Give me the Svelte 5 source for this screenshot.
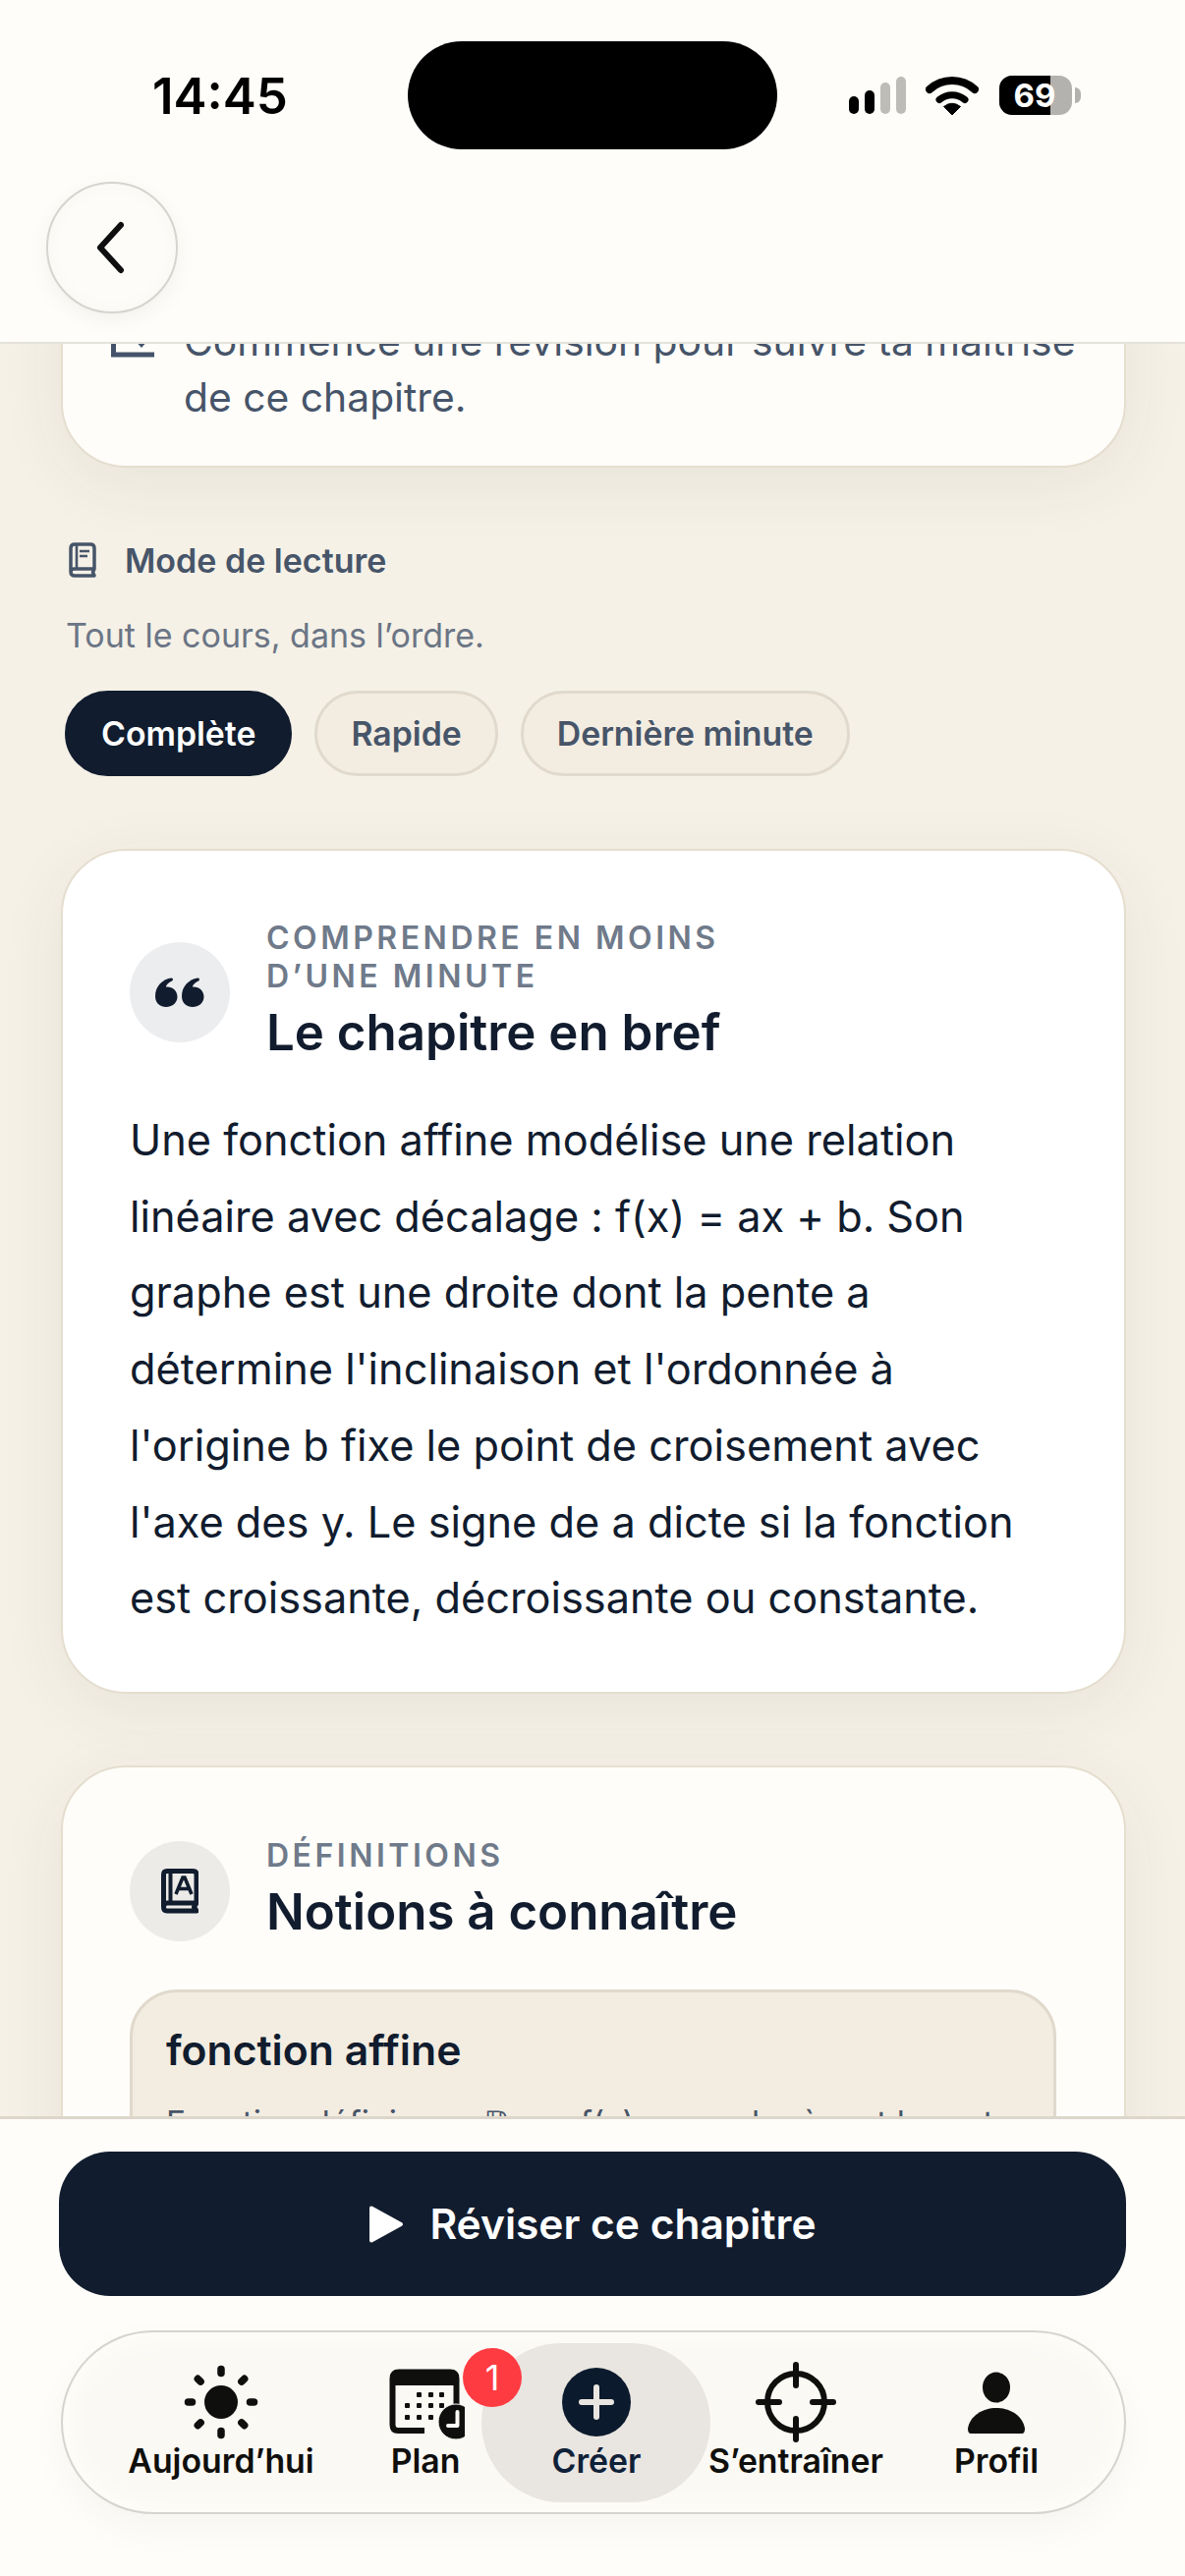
<script>
  const lines = [
    "Une fonction affine modélise une relation",
    "linéaire avec décalage : f(x) = ax + b. Son",
    "graphe est une droite dont la pente a",
    "détermine l'inclinaison et l'ordonnée à",
    "l'origine b fixe le point de croisement avec",
    "l'axe des y. Le signe de a dicte si la fonction",
    "est croissante, décroissante ou constante."
  ];
  const rays = [0, 45, 90, 135, 180, 225, 270, 315];
</script>

<div class="phone">
  <header class="head">
    <div class="status">
      <span class="time">14:45</span>
      <div class="island"></div>
      <div class="sys">
        <svg class="signal" width="58" height="38" viewBox="0 0 58 38">
          <rect x="0" y="20" width="10" height="18" rx="5" fill="#000" />
          <rect x="16" y="14" width="10" height="24" rx="5" fill="#000" />
          <rect x="32" y="6" width="10" height="32" rx="5" fill="#bdbcb7" />
          <rect x="48" y="0" width="10" height="38" rx="5" fill="#bdbcb7" />
        </svg>
        <svg class="wifi" width="54" height="40" viewBox="0 0 54 40">
          <path d="M4 14A34 34 0 0 1 50 14" fill="none" stroke="#000" stroke-width="8" stroke-linecap="round" />
          <path d="M14 24.500A20 20 0 0 1 40 24.500" fill="none" stroke="#000" stroke-width="7" stroke-linecap="round" />
          <path d="M27 40L18.500 31.500Q27 25 35.500 31.500Z" fill="#000" stroke="#000" stroke-width="1" stroke-linejoin="round" />
        </svg>
        <div class="battery">
          <div class="batt-body">
            <div class="batt-fill"></div>
            <span class="batt-num">69</span>
          </div>
          <div class="batt-nub"></div>
        </div>
      </div>
    </div>
    <button class="back" aria-label="Retour">
      <svg width="40" height="60" viewBox="0 0 40 60">
        <path d="M30 7L9 30L30 53" fill="none" stroke="#0f0f0f" stroke-width="6" stroke-linecap="round" stroke-linejoin="round" />
      </svg>
    </button>
  </header>

  <main class="scroll">
    <div class="inner">
      <section class="card progress">
        <svg class="chart" width="44" height="46" viewBox="0 0 44 46">
          <path d="M2.500 0V42H44" fill="none" stroke="#44536b" stroke-width="5" />
          <path d="M24 27L31 35L38 27Z" fill="#44536b" />
        </svg>
        <p>Commence une révision pour suivre ta maîtrise<br />de ce chapitre.</p>
      </section>

      <div class="mode">
        <svg width="28" height="36" viewBox="0 0 28 36">
          <path d="M26 27V6Q26 2 22 2H6Q2 2 2 6V30Q2 34 6 34H26L24.500 30.500L26 27H6Q2 27 2 30" fill="none" stroke="#475569" stroke-width="3.500" stroke-linejoin="round" />
          <path d="M8 3V27M11 9H21M11 14H19" fill="none" stroke="#475569" stroke-width="2.600" />
        </svg>
        <span>Mode de lecture</span>
      </div>
      <p class="mode-sub">Tout le cours, dans l’ordre.</p>
      <div class="chips">
        <span class="chip on">Complète</span>
        <span class="chip">Rapide</span>
        <span class="chip">Dernière minute</span>
      </div>

      <section class="card brief">
        <div class="card-head">
          <div class="disc">
            <svg width="50" height="30" viewBox="0 0 50 30">
              <path d="M11 30C4.500 30 0 25.500 0 19C0 9 7 2 16 0.500C18 0.200 18.800 2.500 17 3.400C13.500 5 11.500 7 10.800 9.500C17 8.800 22.500 13 22.500 19.500C22.500 25.500 17.500 30 11 30Z" fill="#111c2e" />
              <path d="M38 30C31.500 30 27 25.500 27 19C27 9 34 2 43 0.500C45 0.200 45.800 2.500 44 3.400C40.500 5 38.500 7 37.800 9.500C44 8.800 49.500 13 49.500 19.500C49.500 25.500 44.500 30 38 30Z" fill="#111c2e" />
            </svg>
          </div>
          <div class="head-text">
            <div class="eyebrow">COMPRENDRE EN MOINS<br />D’UNE MINUTE</div>
            <h2>Le chapitre en bref</h2>
          </div>
        </div>
        <div class="body-text">
          {#each lines as l}<div>{l}</div>{/each}
        </div>
      </section>

      <section class="card defs">
        <div class="card-head">
          <div class="disc alt">
            <svg width="38" height="46" viewBox="0 0 38 46">
              <path d="M36 35V6Q36 2.500 32 2.500H6Q2.500 2.500 2.500 6V39Q2.500 43 6 43H36L33.500 39L36 35H6Q2.500 35 2.500 39" fill="none" stroke="#111c2e" stroke-width="5" stroke-linejoin="round" />
              <path d="M9.500 4V34" stroke="#111c2e" stroke-width="4" />
              <path d="M15 26L22 9H24L31 26M17.500 20.500H28.500" fill="none" stroke="#111c2e" stroke-width="3.600" />
            </svg>
          </div>
          <div class="head-text">
            <div class="eyebrow">DÉFINITIONS</div>
            <h2>Notions à connaître</h2>
          </div>
        </div>
        <div class="def">
          <h3>fonction affine</h3>
          <p>Fonction définie sur ℝ par f(x) = ax + b où a et b sont des réels.</p>
        </div>
      </section>
    </div>
  </main>

  <footer class="foot">
    <button class="cta">
      <svg width="36" height="40" viewBox="0 0 36 40">
        <path d="M3 3.500V36.500L33 20Z" fill="#fff" stroke="#fff" stroke-width="4" stroke-linejoin="round" />
      </svg>
      <span>Réviser ce chapitre</span>
    </button>

    <nav class="tabs">
      <div class="pill"></div>

      <div class="tab">
        <svg width="80" height="80" viewBox="-40 -40 80 80">
          <circle r="17" fill="#0f0f0d" />
          {#each rays as r}
            <line x1="0" y1="-29.500" x2="0" y2="-33.500" stroke="#0f0f0d" stroke-width="7.500" stroke-linecap="round" transform="rotate({r})" />
          {/each}
        </svg>
        <span>Aujourd’hui</span>
      </div>

      <div class="tab">
        <svg width="80" height="80" viewBox="0 0 80 80">
          <path d="M39 69H12Q6.500 69 6.500 63V16Q6.500 9.500 13 9.500H65Q71.500 9.500 71.500 16V47" fill="none" stroke="#0f0f0d" stroke-width="6" />
          <path d="M5 23V16Q5 8 12 8H66Q73 8 73 16V23Z" fill="#0f0f0d" />
          <g fill="#0f0f0d">
            <rect x="31" y="30" width="5" height="5" rx="1" /><rect x="43" y="30" width="5" height="5" rx="1" /><rect x="54" y="30" width="5" height="5" rx="1" />
            <rect x="19" y="41" width="5" height="5" rx="1" /><rect x="31" y="41" width="5" height="5" rx="1" /><rect x="43" y="41" width="5" height="5" rx="1" /><rect x="54" y="41" width="5" height="5" rx="1" />
            <rect x="19" y="53" width="5" height="5" rx="1" /><rect x="31" y="53" width="5" height="5" rx="1" /><rect x="43" y="53" width="5" height="5" rx="1" />
          </g>
          <circle cx="71" cy="60" r="18" fill="#0f0f0d" stroke="#fcfaf6" stroke-width="1" />
          <path d="M72.500 50V64H63" fill="none" stroke="#fcfaf6" stroke-width="4" stroke-linecap="round" stroke-linejoin="round" />
        </svg>
        <span>Plan</span>
        <div class="badge">1</div>
      </div>

      <div class="tab active">
        <svg width="80" height="80" viewBox="-40 -40 80 80">
          <circle r="35" fill="#0b1a2c" />
          <path d="M0 -15V15M-15 0H15" stroke="#e9e5e0" stroke-width="6" stroke-linecap="round" />
        </svg>
        <span>Créer</span>
      </div>

      <div class="tab">
        <svg width="88" height="88" viewBox="-44 -44 88 88" class="target">
          <circle r="29" fill="none" stroke="#0f0f0d" stroke-width="6" />
          <path d="M0 -38V-17M0 38V17M-38 0H-17M38 0H17" stroke="#0f0f0d" stroke-width="6" stroke-linecap="round" />
        </svg>
        <span>S’entraîner</span>
      </div>

      <div class="tab">
        <svg width="80" height="80" viewBox="-40 -40 80 80">
          <ellipse cx="0" cy="-15" rx="14" ry="15.500" fill="#0f0f0d" />
          <path d="M-26 32Q-29 32 -29 27C-27 14 -14 6 0 6C14 6 27 14 29 27Q29 32 26 32Z" fill="#0f0f0d" />
        </svg>
        <span>Profil</span>
      </div>
    </nav>
  </footer>
</div>

<style>
  :global(body) {
    margin: 0;
    background: #f5f1e7;
  }
  .phone {
    width: 1206px;
    height: 2622px;
    display: flex;
    flex-direction: column;
    overflow: hidden;
    background: #f5f1e7;
    font-family: Inter, "Noto Sans", sans-serif;
    color: #111c2e;
  }
  p, h2, h3 { margin: 0; }

  .head {
    position: relative;
    z-index: 2;
    flex: none;
    box-sizing: border-box;
    height: 350px;
    padding-top: 42px;
    background: #fefdf9;
    border-bottom: 2px solid #e5e2db;
  }
  .status {
    display: flex;
    align-items: center;
    height: 110px;
    padding-left: 155px;
  }
  .time {
    width: 136px;
    font-size: 51px;
    font-weight: 600;
    color: #000;
    white-space: nowrap;
  }
  .island {
    width: 376px;
    height: 110px;
    margin-left: 124px;
    border-radius: 55px;
    background: #000;
  }
  .sys {
    display: flex;
    align-items: center;
    margin-left: 73px;
  }
  .signal { margin-right: 20px; }
  .wifi { margin-right: 21px; }
  .battery {
    display: flex;
    align-items: center;
  }
  .batt-body {
    position: relative;
    width: 74px;
    height: 40px;
    border-radius: 13px;
    overflow: hidden;
    background: #b3b2ae;
  }
  .batt-fill {
    width: 52px;
    height: 100%;
    background: #000;
  }
  .batt-num {
    position: absolute;
    inset: 0;
    display: flex;
    align-items: center;
    justify-content: center;
    padding-right: 2px;
    font-size: 33px;
    font-weight: 700;
    color: #fff;
  }
  .batt-nub {
    width: 6px;
    height: 16px;
    margin-left: 3px;
    border-radius: 0 8px 8px 0;
    background: #b3b2ae;
  }
  .back {
    display: flex;
    align-items: center;
    justify-content: center;
    box-sizing: border-box;
    width: 134px;
    height: 134px;
    margin: 33px 0 0 47px;
    padding: 0;
    border: 2px solid #d6d4ce;
    border-radius: 50%;
    background: #fdfcf8;
    box-shadow: 0 6px 22px rgba(0, 0, 0, .05), inset 0 0 22px rgba(0, 0, 0, .022);
  }
  .back svg { margin-right: 2px; }

  .scroll {
    flex: 1;
    min-height: 0;
    overflow: hidden;
  }
  .inner {
    margin-top: -103px;
    padding: 0 60px;
  }
  .card {
    box-sizing: border-box;
    width: 1084px;
    margin-left: 2px;
    border: 2px solid #e5decf;
    border-radius: 66px;
    background: #fefdf9;
    box-shadow: 0 16px 70px rgba(60, 50, 30, .07);
  }
  .progress {
    display: flex;
    gap: 30px;
    padding: 70px 20px 41px 49px;
  }
  .chart { flex: none; }
  .progress p {
    font-size: 40.800px;
    line-height: 57px;
    color: #465469;
    white-space: nowrap;
  }
  .mode {
    display: flex;
    align-items: center;
    gap: 29px;
    height: 50px;
    margin: 69px 0 0 10px;
    font-size: 34px;
    font-weight: 600;
    color: #475569;
  }
  .mode-sub {
    margin: 30px 0 0 7px;
    font-size: 34px;
    line-height: 44px;
    color: #6b7585;
  }
  .chips {
    display: flex;
    gap: 23px;
    margin: 34px 0 0 6px;
  }
  .chip {
    box-sizing: border-box;
    display: flex;
    align-items: center;
    height: 87px;
    padding: 0 34px;
    border: 3px solid #e0d9cc;
    border-radius: 44px;
    background: #f3ece1;
    font-size: 33.800px;
    font-weight: 600;
    color: #475569;
  }
  .chip.on {
    border-color: #111c2e;
    background: #111c2e;
    color: #fff;
  }
  .brief {
    height: 860px;
    margin-top: 74px;
    padding: 69px 68px 0;
    background: #fff;
  }
  .card-head {
    display: flex;
    align-items: center;
    gap: 37px;
  }
  .disc {
    flex: none;
    display: flex;
    align-items: center;
    justify-content: center;
    width: 102px;
    height: 102px;
    border-radius: 50%;
    background: #ecedef;
  }
  .disc.alt { background: #ecebe8; }
  .eyebrow {
    margin-bottom: 3px;
    font-size: 32px;
    line-height: 39px;
    font-weight: 600;
    letter-spacing: 3.500px;
    color: #6f7a8a;
  }
  h2 {
    font-size: 51px;
    line-height: 70px;
    font-weight: 600;
    color: #111c2e;
  }
  .brief .card-head { align-items: flex-start; }
  .brief .disc { margin-top: 24px; }
  .body-text {
    margin-top: 36px;
    font-size: 43.300px;
    line-height: 77.700px;
    color: #111c2e;
    white-space: nowrap;
  }
  .defs {
    height: 700px;
    margin-top: 73px;
    padding: 70px 68px 0;
  }
  .def {
    margin-top: 44px;
    padding: 32px 34px;
    border: 3px solid #e0d9cc;
    border-radius: 48px;
    background: #f3ece1;
    height: 400px;
    width: 943px;
    box-sizing: border-box;
  }
  h3 {
    font-size: 42.700px;
    line-height: 54px;
    font-weight: 600;
  }
  .def p {
    margin-top: 20px;
    font-size: 33.600px;
    line-height: 54px;
    color: #475569;
    font-family: Inter, "DejaVu Sans", sans-serif;
  }

  .foot {
    position: relative;
    z-index: 2;
    flex: none;
    box-sizing: border-box;
    height: 468px;
    padding: 33px 60px 0;
    border-top: 3px solid #ddd6ca;
    background: #fefdf9;
  }
  .cta {
    display: flex;
    align-items: center;
    justify-content: center;
    gap: 26px;
    box-sizing: border-box;
    width: 1086px;
    height: 147px;
    padding: 0;
    border: 0;
    border-radius: 52px;
    background: #111c2e;
    color: #fff;
    font-family: inherit;
    font-size: 42.500px;
    font-weight: 600;
  }
  .tabs {
    position: relative;
    display: grid;
    grid-template-columns: 206px 210px 138px 268px 140px;
    box-sizing: border-box;
    width: 1084px;
    height: 187px;
    margin: 35px 0 0 2px;
    padding-left: 58px;
    border: 2px solid #d6d4ce;
    border-radius: 94px;
    background: #fbf9f4;
    box-shadow: 0 16px 40px rgba(0, 0, 0, .035), inset 0 0 34px #fffefb;
  }
  .pill {
    position: absolute;
    left: 426px;
    top: 11px;
    width: 233px;
    height: 162px;
    border-radius: 81px;
    background: #e9e5e0;
  }
  .tab {
    position: relative;
    display: flex;
    flex-direction: column;
    align-items: center;
    height: 100%;
    font-size: 33.800px;
    font-weight: 600;
    color: #0f0f0d;
    white-space: nowrap;
  }
  .tab svg {
    flex: none;
    margin-top: 31px;
  }
  .tab svg.target { margin-top: 27px; margin-bottom: -4px; }
  .tab span { margin-top: -2px; line-height: 44px; }
  .tab.active { color: #0f2138; }
  .badge {
    position: absolute;
    left: 143px;
    top: 16px;
    display: flex;
    align-items: center;
    justify-content: center;
    width: 60px;
    height: 60px;
    border-radius: 50%;
    background: #ff3b42;
    color: #fff;
    font-size: 36px;
    font-weight: 400;
  }
</style>
